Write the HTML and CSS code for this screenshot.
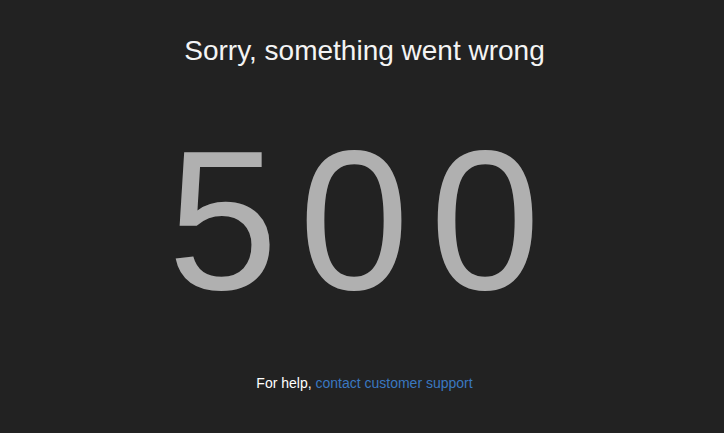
FILE: index.html
```html
<!DOCTYPE html>
<html>
<head>
<meta charset="utf-8">
<link rel="stylesheet" href="styles.css">
</head>
<body>
<main class="page">
  <h1 class="title">Sorry, something went wrong</h1>
  <div class="code">500</div>
  <p class="help">For help, <a class="link" href="#">contact customer support</a></p>
</main>
</body>
</html>
```
FILE: styles.css
```css
html, body {
  margin: 0;
  padding: 0;
  background: #222222;
  height: 100%;
}
.page {
  display: flex;
  flex-direction: column;
  align-items: center;
  font-family: "Liberation Sans", Arial, sans-serif;
  padding-top: 33px;
  padding-left: 5px;
}
.title {
  margin: 0;
  font-size: 28px;
  font-weight: normal;
  color: #f4f4f4;
  line-height: 36px;
}
.code {
  margin-top: 52px;
  font-size: 198px;
  line-height: 200px;
  letter-spacing: 21px;
  color: #b0b0b0;
}
.help {
  margin: 52px 0 0;
  font-size: 14px;
  line-height: 20px;
  color: #ffffff;
}
.link {
  color: #3a78c0;
  text-decoration: none;
}
```
